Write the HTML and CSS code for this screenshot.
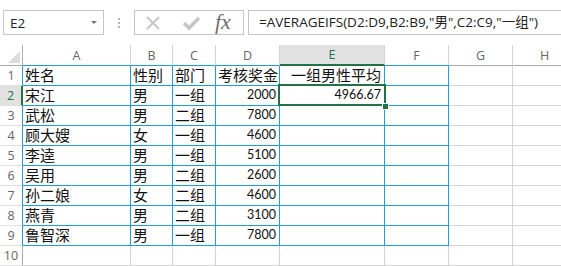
FILE: index.html
```html
<!DOCTYPE html>
<html>
<head>
  <title>AVERAGEIFS</title>
  <link rel="stylesheet" href="styles.css">
</head>
<body>
  <div class="formula-bar">
    <div class="name-box"><span>E2</span><span class="caret"></span></div>
    <div class="grip"></div>
    <div class="fx-box">
      <svg class="btn-x" width="16" height="16" viewBox="0 0 16 16">
        <path d="M2 2 L14 14 M14 2 L2 14" stroke="#c6c6c6" stroke-width="2" fill="none"/>
      </svg>
      <svg class="btn-ok" width="20" height="16" viewBox="0 0 20 16">
        <path d="M3 8 L8 13 L18 3" stroke="#c6c6c6" stroke-width="3.5" fill="none"/>
      </svg>
      <span class="fx">fx</span>
    </div>
    <div class="formula">=AVERAGEIFS(D2:D9,B2:B9,"男",C2:C9,"一组")</div>
  </div>

  <div class="sheet">
    <!-- column headers -->
    <div class="ch corner"><span class="tri"></span></div>
    <div class="ch bl">A</div>
    <div class="ch bl">B</div>
    <div class="ch bl">C</div>
    <div class="ch bl">D</div>
    <div class="ch sel">E</div>
    <div class="ch bl">F</div>
    <div class="ch">G</div>
    <div class="ch">H</div>

    <!-- row 1 -->
    <div class="rh bl">1</div>
    <div class="c b">姓名</div>
    <div class="c b">性别</div>
    <div class="c b">部门</div>
    <div class="c b">考核奖金</div>
    <div class="c b r">一组男性平均</div>
    <div class="c b"></div>
    <div class="c"></div>
    <div class="c"></div>

    <!-- row 2 -->
    <div class="rh sel">2</div>
    <div class="c b">宋江</div>
    <div class="c b">男</div>
    <div class="c b">一组</div>
    <div class="c b num">2000</div>
    <div class="c b num active">4966.67</div>
    <div class="c b"></div>
    <div class="c"></div>
    <div class="c"></div>

    <!-- row 3 -->
    <div class="rh bl">3</div>
    <div class="c b">武松</div>
    <div class="c b">男</div>
    <div class="c b">二组</div>
    <div class="c b num">7800</div>
    <div class="c b"></div>
    <div class="c b"></div>
    <div class="c"></div>
    <div class="c"></div>

    <!-- row 4 -->
    <div class="rh bl">4</div>
    <div class="c b">顾大嫂</div>
    <div class="c b">女</div>
    <div class="c b">一组</div>
    <div class="c b num">4600</div>
    <div class="c b"></div>
    <div class="c b"></div>
    <div class="c"></div>
    <div class="c"></div>

    <!-- row 5 -->
    <div class="rh bl">5</div>
    <div class="c b">李逵</div>
    <div class="c b">男</div>
    <div class="c b">一组</div>
    <div class="c b num">5100</div>
    <div class="c b"></div>
    <div class="c b"></div>
    <div class="c"></div>
    <div class="c"></div>

    <!-- row 6 -->
    <div class="rh bl">6</div>
    <div class="c b">吴用</div>
    <div class="c b">男</div>
    <div class="c b">二组</div>
    <div class="c b num">2600</div>
    <div class="c b"></div>
    <div class="c b"></div>
    <div class="c"></div>
    <div class="c"></div>

    <!-- row 7 -->
    <div class="rh bl">7</div>
    <div class="c b">孙二娘</div>
    <div class="c b">女</div>
    <div class="c b">二组</div>
    <div class="c b num">4600</div>
    <div class="c b"></div>
    <div class="c b"></div>
    <div class="c"></div>
    <div class="c"></div>

    <!-- row 8 -->
    <div class="rh bl">8</div>
    <div class="c b">燕青</div>
    <div class="c b">男</div>
    <div class="c b">二组</div>
    <div class="c b num">3100</div>
    <div class="c b"></div>
    <div class="c b"></div>
    <div class="c"></div>
    <div class="c"></div>

    <!-- row 9 -->
    <div class="rh bl">9</div>
    <div class="c b">鲁智深</div>
    <div class="c b">男</div>
    <div class="c b">一组</div>
    <div class="c b num">7800</div>
    <div class="c b"></div>
    <div class="c b"></div>
    <div class="c"></div>
    <div class="c"></div>

    <!-- row 10 -->
    <div class="rh">10</div>
    <div class="c"></div>
    <div class="c"></div>
    <div class="c"></div>
    <div class="c"></div>
    <div class="c"></div>
    <div class="c"></div>
    <div class="c"></div>
    <div class="c"></div>
  </div>
</body>
</html>
```

FILE: styles.css
```css
body {
  margin: 0;
  background: #fff;
  color: #222;
  font-family: "Open Sans", "Noto Sans CJK SC", sans-serif;
  overflow: hidden;
}

/* formula bar */
.formula-bar {
  display: flex;
  height: 25px;
  margin-top: 10px;
}
.name-box {
  box-sizing: border-box;
  width: 101px;
  height: 25px;
  margin-left: 3px;
  border: 1px solid #c6c6c6;
  display: flex;
  align-items: center;
  justify-content: space-between;
  padding: 0 6px 0 6px;
  font-size: 13.5px;
}
.caret {
  width: 0;
  height: 0;
  border-left: 3px solid transparent;
  border-right: 3px solid transparent;
  border-top: 3px solid #777;
}
.grip {
  width: 2px;
  height: 10px;
  margin: 8px 14px 0 14px;
  background: repeating-linear-gradient(#b5b5b5 0 2px, transparent 2px 4px);
}
.fx-box {
  box-sizing: border-box;
  width: 110px;
  height: 25px;
  border: 1px solid #c6c6c6;
  display: flex;
  align-items: center;
  padding-left: 10px;
}
.btn-x {
  margin-right: 20px;
}
.btn-ok {
  margin-right: 14px;
}
.fx {
  font-family: "Liberation Serif", serif;
  font-style: italic;
  font-size: 22px;
  color: #6e6e6e;
  margin-top: -1px;
}
.formula {
  box-sizing: border-box;
  flex: 1;
  height: 25px;
  margin-left: 4px;
  border: 1px solid #c6c6c6;
  border-right: none;
  padding-left: 10px;
  font-size: 13.5px;
  line-height: 23px;
  white-space: nowrap;
}

/* grid */
.sheet {
  display: grid;
  grid-template-columns: 23px 108px 42px 43px 64px 105px 64px 64px 64px;
  grid-auto-rows: 20px;
  grid-template-rows: 21px;
  margin-top: 10px;
}
.ch,
.rh,
.c {
  box-sizing: border-box;
  border-right: 1px solid #d4d4d4;
  border-bottom: 1px solid #d4d4d4;
  display: flex;
  white-space: nowrap;
  overflow: visible;
}
.ch {
  align-items: center;
  justify-content: center;
  font-size: 12.5px;
  color: #666;
  border-bottom-color: #ababab;
}
.ch.bl {
  border-bottom-color: #1e9fcf;
}
.ch.sel {
  background: #e1e1e1;
  color: #217346;
  border-bottom: 2px solid #217346;
}
.corner {
  position: relative;
  border-right-color: #ababab;
}
.tri {
  position: absolute;
  right: 2px;
  bottom: 2px;
  width: 0;
  height: 0;
  border-left: 12px solid transparent;
  border-bottom: 12px solid #dcdcdc;
}
.rh {
  align-items: center;
  justify-content: center;
  font-size: 12.5px;
  color: #666;
  border-right-color: #ababab;
  border-bottom-color: #e1e1e1;
}
.rh.bl {
  border-right-color: #1e9fcf;
}
.rh.sel {
  background: #e1e1e1;
  color: #217346;
  border-right: 2px solid #217346;
}
.c {
  align-items: flex-end;
  padding: 0 3px 1px 2px;
  font-size: 15px;
  line-height: 18px;
  color: #111;
}
.c.b {
  border-right-color: #1e9fcf;
  border-bottom-color: #1e9fcf;
}
.c.r {
  justify-content: flex-end;
}
.num {
  justify-content: flex-end;
  font-family: "Lato", sans-serif;
  font-size: 12.5px;
}
.active {
  position: relative;
}
.active::before {
  content: "";
  position: absolute;
  left: -2px;
  top: -2px;
  right: -2px;
  bottom: -1px;
  border: 2px solid #217346;
}
.active::after {
  content: "";
  position: absolute;
  right: -5px;
  bottom: -5px;
  width: 5px;
  height: 5px;
  background: #217346;
  border: 1px solid #fff;
}
```
